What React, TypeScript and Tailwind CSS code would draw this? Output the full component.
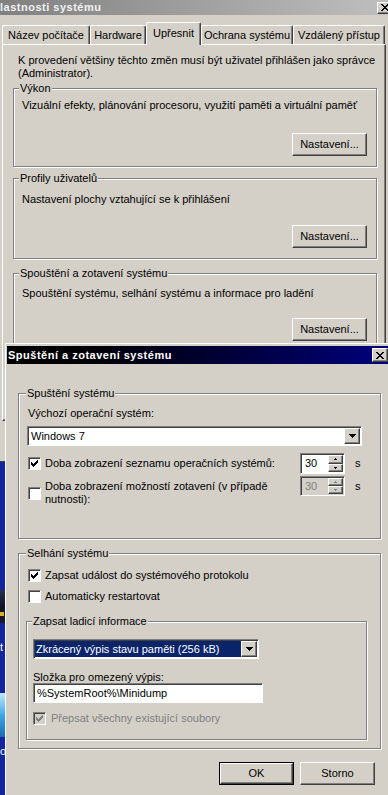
import React from "react";

// classic 3D borders
const raised =
  "border border-t-white border-l-white border-r-[#404040] border-b-[#404040] shadow-[inset_-1px_-1px_0_#808080]";
const sunken =
  "border border-t-[#808080] border-l-[#808080] border-r-white border-b-white shadow-[inset_1px_1px_0_#404040]";
const etched = "border border-[#808080] shadow-[inset_1px_1px_0_#fff,1px_1px_0_#fff]";

// pixel glyphs, X = filled
function Pix({ rows, color = "#000" }: { rows: string[]; color?: string }) {
  return (
    <svg width={rows[0].length} height={rows.length} shapeRendering="crispEdges" className="block">
      {rows.flatMap((r, y) =>
        r.split("").map((c, x) =>
          c === "X" ? <rect key={`${x}-${y}`} x={x} y={y} width={1} height={1} fill={color} /> : null
        )
      )}
    </svg>
  );
}

const CHECK = ["......X", ".....XX", "X...XXX", "XX.XXX.", "XXXXX..", ".XXX...", "..X...."];
const CROSS = ["XX....XX", ".XX..XX.", "..XXXX..", "...XX...", "..XXXX..", ".XX..XX.", "XX....XX"];
const DOWN = ["XXXXXXX", ".XXXXX.", "..XXX..", "...X..."];
const SPIN_UP = [".X.", "XXX"];
const SPIN_DOWN = ["XXX", ".X."];

function CloseBtn({ h = 14 }: { h?: number }) {
  return (
    <div className={`w-[16px] ${h === 14 ? "h-[14px]" : "h-[12px]"} bg-[#d4d0c8] ${raised} flex items-center justify-center`}>
      <Pix rows={CROSS} />
    </div>
  );
}

function Button({ children, def }: { children: React.ReactNode; def?: boolean }) {
  return (
    <div className={`w-[75px] h-[23px] ${def ? "border border-black" : ""}`}>
      <div className={`h-full ${raised} flex items-center justify-center`}>{children}</div>
    </div>
  );
}

function Check({ checked, disabled }: { checked?: boolean; disabled?: boolean }) {
  return (
    <span
      className={`w-[13px] h-[13px] shrink-0 ${sunken} ${disabled ? "bg-[#d4d0c8]" : "bg-white"} flex items-center justify-center`}
    >
      {checked && <Pix rows={CHECK} color={disabled ? "#808080" : "#000"} />}
    </span>
  );
}

function Group({
  title,
  legend,
  className,
  children,
}: {
  title: string;
  legend: string;
  className: string;
  children: React.ReactNode;
}) {
  return (
    <div className={`relative ${etched} ${className}`}>
      <span className={`absolute top-[-7px] ${legend} px-[1px] bg-[#d4d0c8] leading-[13px] whitespace-nowrap`}>
        {title}
      </span>
      {children}
    </div>
  );
}

function Spin({ disabled }: { disabled?: boolean }) {
  return (
    <div
      className={`w-[45px] ${disabled ? "h-[20px] bg-[#d4d0c8] text-[#808080]" : "h-[21px] bg-white"} ${sunken} p-[1px] flex`}
    >
      <div className="flex-1 pl-[3px] flex items-center">30</div>
      <div className="w-[15px] flex flex-col">
        <div className={`flex-1 bg-[#d4d0c8] ${raised} flex items-center justify-center`}>
          <Pix rows={SPIN_UP} color={disabled ? "#808080" : "#000"} />
        </div>
        <div className={`flex-1 bg-[#d4d0c8] ${raised} flex items-center justify-center`}>
          <Pix rows={SPIN_DOWN} color={disabled ? "#808080" : "#000"} />
        </div>
      </div>
    </div>
  );
}

const tabs = [
  { label: "Název počítače", w: "w-[88px]" },
  { label: "Hardware", w: "w-[56px]" },
  { label: "Upřesnit", w: "w-[55px]", active: true },
  { label: "Ochrana systému", w: "w-[92px]" },
  { label: "Vzdálený přístup", w: "w-[92px]" },
];

function BackWindow() {
  return (
    <div className="absolute left-[-4px] top-0 w-[400px] h-[462px] bg-[#d4d0c8] border-b border-[#404040]">
      <div className="h-[15px] bg-linear-to-r from-[#808080] to-[#c0c0c0] flex items-center justify-between pl-[4px] pr-[3px]">
        <span className="font-bold tracking-[0.5px] text-[#f2f2f2] whitespace-nowrap">lastnosti systému</span>
        <CloseBtn h={12} />
      </div>

      <div className="px-[6px] pt-[7px]">
        <div className="relative z-10 flex items-end h-[22px]">
          {tabs.map((t) => (
            <div
              key={t.label}
              className={`${t.w} ${
                t.active ? "h-[23px] -mb-px pb-[2px] bg-[#d4d0c8]" : "h-[19px]"
              } border-t border-l border-r border-t-white border-l-white border-r-[#404040] shadow-[inset_-1px_0_0_#808080] rounded-t-[2px] flex items-center justify-center whitespace-nowrap`}
            >
              {t.label}
            </div>
          ))}
        </div>

        <div className={`w-[384px] h-[377px] ${raised} pt-[9px] pl-[10px]`}>
          <p className="pl-[5px] whitespace-nowrap">
            K provedení většiny těchto změn musí být uživatel přihlášen jako správce
            <br />
            (Administrator).
          </p>

          <Group title="Výkon" legend="left-[5px]" className="w-[364px] mt-[8px] pt-[10px] pl-[8px] pr-[9px] pb-[10px]">
            <p className="whitespace-nowrap">Vizuální efekty, plánování procesoru, využití paměti a virtuální paměť</p>
            <div className="flex justify-end mt-[21px]">
              <Button>Nastavení...</Button>
            </div>
          </Group>

          <Group title="Profily uživatelů" legend="left-[5px]" className="w-[364px] mt-[11px] pt-[14px] pl-[8px] pr-[9px] pb-[10px]">
            <p className="whitespace-nowrap">Nastavení plochy vztahující se k přihlášení</p>
            <div className="flex justify-end mt-[19px]">
              <Button>Nastavení...</Button>
            </div>
          </Group>

          <Group title="Spouštění a zotavení systému" legend="left-[5px]" className="w-[364px] mt-[14px] pt-[13px] pl-[8px] pr-[9px] pb-[10px]">
            <p className="whitespace-nowrap">Spouštění systému, selhání systému a informace pro ladění</p>
            <div className="flex justify-end mt-[18px]">
              <Button>Nastavení...</Button>
            </div>
          </Group>
        </div>
      </div>
    </div>
  );
}

function StartupDialog() {
  return (
    <div className="absolute left-[5px] top-[343px] w-[389px] h-[460px] bg-[#d4d0c8] border-t border-l border-white pt-[2px] pl-[1px]">
      {/* title bar */}
      <div className="w-[385px] h-[18px] bg-linear-to-r from-black to-[#000080] flex items-center justify-between pl-[1px] pr-[4px]">
        <span className="font-bold tracking-[0.5px] text-white whitespace-nowrap">Spuštění a zotavení systému</span>
        <CloseBtn />
      </div>

      <div className="ml-[11px] w-[363px]">
        <Group title="Spuštění systému" legend="left-[7px]" className="mt-[29px] pt-[13px] pl-[9px] pb-[32px]">
          <p>Výchozí operační systém:</p>
          <div className={`mt-[6px] -ml-px w-[335px] h-[20px] bg-white ${sunken} p-[1px] flex`}>
            <div className="flex-1 pl-[2px] flex items-center">Windows 7</div>
            <div className={`w-[16px] h-full bg-[#d4d0c8] ${raised} flex items-center justify-center`}>
              <Pix rows={DOWN} />
            </div>
          </div>

          <div className="mt-[7px] h-[21px] flex items-center">
            <div className="w-[272px] flex items-center gap-[4px]">
              <Check checked />
              <span className="whitespace-nowrap">Doba zobrazení seznamu operačních systémů:</span>
            </div>
            <Spin />
            <span className="ml-[10px]">s</span>
          </div>

          <div className="mt-[2px] flex items-start">
            <div className="w-[272px] mt-[4px] flex items-center gap-[4px]">
              <Check />
              <span className="whitespace-nowrap">
                Doba zobrazení možností zotavení (v případě
                <br />
                nutnosti):
              </span>
            </div>
            <Spin disabled />
            <span className="ml-[10px] leading-[20px]">s</span>
          </div>
        </Group>

        <Group title="Selhání systému" legend="left-[7px]" className="mt-[14px] pt-[15px] pl-[9px] pb-[8px]">
          <label className="flex items-center gap-[4px] h-[13px]">
            <Check checked />
            <span className="whitespace-nowrap">Zapsat událost do systémového protokolu</span>
          </label>
          <label className="mt-[8px] flex items-center gap-[4px] h-[13px]">
            <Check />
            <span className="whitespace-nowrap">Automaticky restartovat</span>
          </label>

          <Group title="Zapsat ladicí informace" legend="left-[5px]" className="mt-[18px] -ml-[2px] w-[341px] pt-[17px] pl-[6px] pb-[14px]">
            <div className={`w-[226px] h-[20px] bg-white ${sunken} p-[1px] flex`}>
              <div className="flex-1 bg-[#0a246a] text-white pl-[1px] flex items-center whitespace-nowrap">
                Zkrácený výpis stavu paměti (256 kB)
              </div>
              <div className={`w-[16px] h-full bg-[#d4d0c8] ${raised} flex items-center justify-center`}>
                <Pix rows={DOWN} />
              </div>
            </div>
            <p className="mt-[12px] leading-[12px]">Složka pro omezený výpis:</p>
            <div className={`w-[230px] h-[20px] bg-white ${sunken} pl-[3px] flex items-center`}>
              %SystemRoot%\Minidump
            </div>
            <div className="mt-[9px] flex items-center gap-[5px] h-[13px]">
              <Check checked disabled />
              <span className="text-[#808080] whitespace-nowrap">Přepsat všechny existující soubory</span>
            </div>
          </Group>
        </Group>

        <div className="mt-[13px] pr-[6px] flex justify-end gap-[6px]">
          <Button def>OK</Button>
          <Button>Storno</Button>
        </div>
      </div>
    </div>
  );
}

export default function App() {
  return (
    <div className="relative w-[388px] h-[795px] overflow-hidden bg-[#14239f] font-['Liberation_Sans',Arial,sans-serif] text-[11px] leading-[13px] text-black">
      {/* desktop icon fragments peeking out on the left */}
      <div className="absolute left-0 top-[590px] w-[5px] h-[33px] bg-linear-to-b from-[#2a3050] via-[#101428] to-[#1a1a30]" />
      <div className="absolute left-0 top-[612px] w-[4px] h-[4px] bg-[#d8b020]" />
      <span className="absolute left-0 top-[641px] text-white">t</span>
      <div className="absolute left-0 top-[693px] w-[5px] h-[44px] bg-linear-to-b from-[#bfe8ff] via-[#3aa8e8] to-[#1a6cb0]" />
      <span className="absolute left-0 top-[745px] text-white">o</span>

      <BackWindow />
      <StartupDialog />
    </div>
  );
}
